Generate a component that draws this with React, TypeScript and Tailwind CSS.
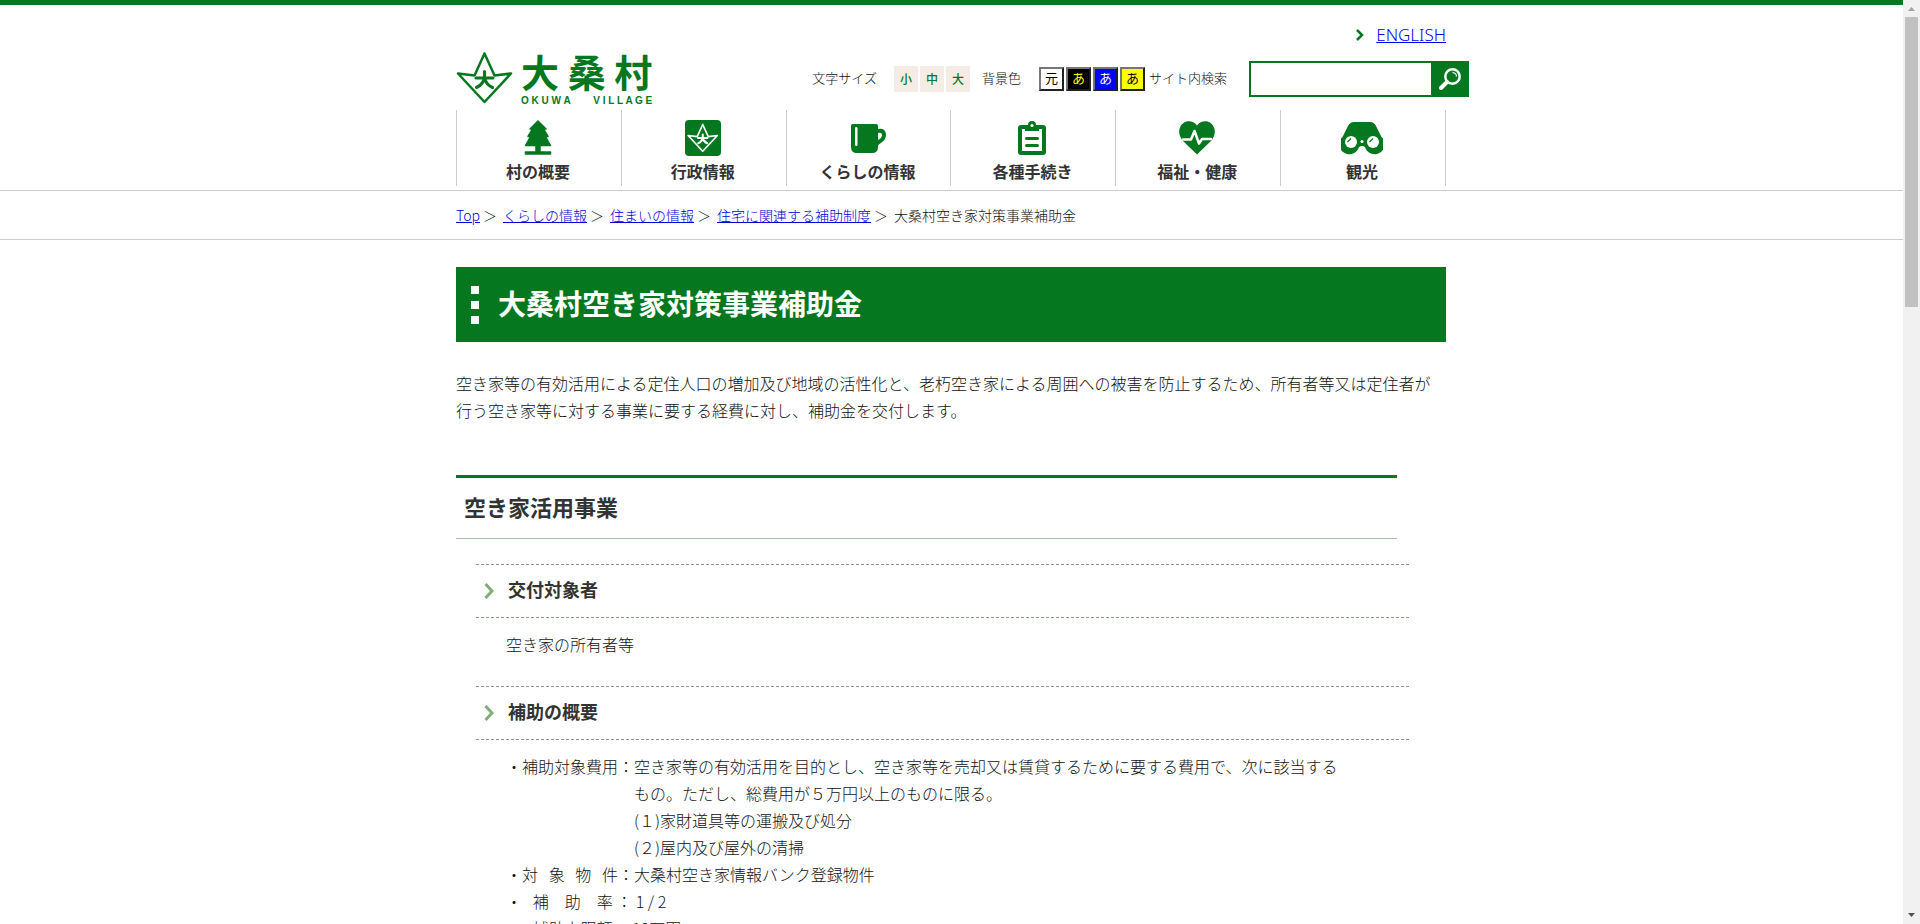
import type { ReactNode } from "react"

const GREEN = "#05771f"

function VillageMark({ className, weight }: { className: string; weight: number }) {
  return (
    <svg viewBox="0 0 58 54" fill="none" stroke="currentColor" className={className} aria-hidden="true">
      <path d="M28.500 2.500 18.500 24.500 2 22.500 28.500 51 55 22.500 38.500 24.500Z" strokeWidth={weight} strokeLinejoin="round" />
      <path
        d="M20 27H37M28.500 20.500V26Q27.500 33.500 20.500 36.500M28.500 27Q30 33.500 36.500 36.500"
        strokeWidth={weight * 1.25}
        strokeLinecap="round"
      />
    </svg>
  )
}

function TreeIcon() {
  return (
    <svg viewBox="0 0 36 36" fill={GREEN} stroke={GREEN} strokeLinejoin="round" className="h-9 w-9">
      <path d="M18 1 26 9H23.500L28 16.500H25.500L30.500 25.500H20V32H30.500V34H5.500V32H16V25.500H5.500L10.500 16.500H8L12.500 9H10Z" strokeWidth="1.500" />
    </svg>
  )
}

function MarkIcon() {
  return (
    <span className="flex h-9 w-9 items-center justify-center rounded bg-[#05771f] text-white">
      <VillageMark className="h-[30px] w-8" weight={3} />
    </span>
  )
}

function CupIcon() {
  return (
    <svg viewBox="0 0 36 36" fill={GREEN} className="h-9 w-9">
      <path d="M2.500 4H26Q28 4 28 6V9Q35.500 7.500 36 14.500C36 21 31 22 28 25.500V27Q28 33 22 33H7Q1 33 1 27V6Q1 4 2.500 4Z" />
      <path d="M28 13Q32 12 32 15T28 20Z" fill="white" />
      <rect x="5" y="7" width="2.500" height="19" rx="1.200" fill="white" />
    </svg>
  )
}

function ClipboardIcon() {
  return (
    <svg viewBox="0 0 36 36" fill="none" stroke={GREEN} className="h-9 w-9">
      <rect x="6" y="7" width="24" height="26" rx="1" strokeWidth="4" />
      <path d="M11 5H14A4 4 0 0 1 22 5H25V11H11Z" fill={GREEN} stroke="none" />
      <circle cx="18" cy="5.500" r="1.500" fill="white" stroke="none" />
      <path d="M12.500 18.500H23.500M12.500 25.500H23.500" strokeWidth="3" strokeLinecap="round" />
    </svg>
  )
}

function HeartIcon() {
  return (
    <svg viewBox="0 0 36 36" fill={GREEN} className="h-9 w-9">
      <path d="M18 34.500 4 21Q-1 15 .5 9C3 0 13-1 18 5.500 23-1 33 0 35.500 9Q37 15 32 21Z" />
      <path d="M4 19.500H12L15.500 11 20 23.500 23 19H32" fill="none" stroke="white" strokeWidth="2.500" strokeLinejoin="round" strokeLinecap="round" />
    </svg>
  )
}

function BinocularsIcon() {
  return (
    <svg viewBox="0 0 42 36" fill={GREEN} className="h-9 w-[42px]">
      <path d="M13 2H29Q33 2 35 6L40.500 17A10 10 0 1 1 24 27Q21 25 18 27A10 10 0 1 1 1.500 17L7 6Q9 2 13 2Z" />
      <circle cx="10" cy="22" r="6" fill="white" />
      <circle cx="32" cy="22" r="6" fill="white" />
      <circle cx="21" cy="21.500" r="1.500" fill="white" />
      <path d="M6.500 22 10 18.500M28.500 22 32 18.500" fill="none" stroke={GREEN} strokeWidth="1.200" />
    </svg>
  )
}

const navItems: { label: string; icon: ReactNode }[] = [
  { label: "村の概要", icon: <TreeIcon /> },
  { label: "行政情報", icon: <MarkIcon /> },
  { label: "くらしの情報", icon: <CupIcon /> },
  { label: "各種手続き", icon: <ClipboardIcon /> },
  { label: "福祉・健康", icon: <HeartIcon /> },
  { label: "観光", icon: <BinocularsIcon /> },
]

const crumbs = ["Top", "くらしの情報", "住まいの情報", "住宅に関連する補助制度"]

const colorButtons = [
  { label: "元", style: "bg-white text-black" },
  { label: "あ", style: "bg-black text-[#ffff00]" },
  { label: "あ", style: "bg-[#0000ff] text-white" },
  { label: "あ", style: "bg-[#ffff00] text-black" },
]

function SubHeading({ children }: { children: ReactNode }) {
  return (
    <h3 className="ml-5 flex h-[54px] w-[933px] items-center gap-[14px] border-y border-dashed border-[#7f9f7f] pl-2 text-lg font-bold text-[#333]">
      <svg viewBox="0 0 10 16" className="h-4 w-[10px]" fill="none" stroke="#82ad76" strokeWidth="3">
        <path d="M1.500 1 8 8 1.500 15" />
      </svg>
      <span className="pb-1">{children}</span>
    </h3>
  )
}

function Header() {
  return (
    <header className="border-b border-[#ccc] border-t-[5px] border-t-[#05771f]">
      <div className="mx-auto w-[991px] pr-px">
        <div className="flex h-[105px] justify-between">
          <a href="#" className="flex items-start gap-[7px] pt-[46px] text-[#05771f]">
            <VillageMark className="h-[54px] w-[58px]" weight={2.5} />
            <span className="flex flex-col">
              <span className="text-[38px] leading-10 font-bold">大 桑 村</span>
              <span className="flex justify-between pt-1 font-['Liberation_Sans'] text-[10px] leading-3 font-bold">
                <span>O K U W A</span>
                <span>V I L L A G E</span>
              </span>
            </span>
          </a>
          <div className="-mr-[23px] flex flex-col">
            <div className="flex h-[56px] items-center justify-end gap-3 pt-1 pr-[23px]">
              <svg viewBox="0 0 8 12" className="h-3 w-2" fill="none" stroke={GREEN} strokeWidth="2.500">
                <path d="M1 1 6 6 1 11" />
              </svg>
              <a href="#" className="font-['Noto_Sans'] text-[17px] font-light text-[#0000ee] underline">
                ENGLISH
              </a>
            </div>
            <div className="flex h-9 items-center text-[13px] font-light text-[#111]">
              <span className="mr-[17px] pb-[2px]">文字サイズ</span>
              <div className="flex gap-[2px]">
                {["小", "中", "大"].map((size) => (
                  <button key={size} type="button" className="h-[26px] w-6 bg-[#f5ece6] text-xs font-medium text-[#05771f]">
                    {size}
                  </button>
                ))}
              </div>
              <span className="mr-[18px] ml-3 pb-[2px]">背景色</span>
              <div className="flex gap-[2px]">
                {colorButtons.map((b, i) => (
                  <button
                    key={i}
                    type="button"
                    className={`flex h-6 w-[25px] items-center justify-center border-2 border-t-[#767676] border-r-[#212121] border-b-[#212121] border-l-[#767676] pb-[2px] text-[13px] font-normal ${b.style}`}
                  >
                    {b.label}
                  </button>
                ))}
              </div>
              <label htmlFor="site-search" className="mr-[22px] ml-1 pb-[2px]">
                サイト内検索
              </label>
              <input id="site-search" type="text" className="h-9 w-[182px] border-2 border-r-0 border-[#05771f] px-2" />
              <button type="submit" aria-label="検索" className="flex h-9 w-[38px] items-center justify-center bg-[#05771f]">
                <svg viewBox="0 0 24 24" className="h-6 w-6" fill="none" stroke="white">
                  <circle cx="14.500" cy="9.500" r="7.200" strokeWidth="2.500" />
                  <path d="M9 15 3 21" strokeWidth="4" strokeLinecap="round" />
                  <path d="M14.500 5.500Q18.500 6 18.500 9.500" strokeWidth="1.200" />
                </svg>
              </button>
            </div>
          </div>
        </div>
        <nav className="mb-1 grid h-[76px] grid-cols-6 border-r border-[#ccc]">
          {navItems.map((item) => (
            <a
              key={item.label}
              href="#"
              className="flex flex-col items-center border-l border-[#ccc] pt-[10px] pr-[2px] text-base leading-[30px] font-bold text-[#333]"
            >
              {item.icon}
              {item.label}
            </a>
          ))}
        </nav>
      </div>
    </header>
  )
}

function Breadcrumbs() {
  return (
    <div className="border-b border-[#ccc]">
      <div className="mx-auto flex h-12 w-[991px] items-center pr-px text-sm font-light text-[#111]">
        {crumbs.map((c) => (
          <span key={c} className="flex">
            <a href="#" className="text-[#0000dd] underline">
              {c}
            </a>
            <span className="mr-[6px] ml-[3px]">＞</span>
          </span>
        ))}
        <span>大桑村空き家対策事業補助金</span>
      </div>
    </div>
  )
}

function Article() {
  return (
    <main className="mx-auto w-[991px] pt-[27px] pr-px text-base leading-[27px] font-light text-[#111]">
      <h1 className="flex h-[75px] items-center gap-[19px] bg-[#05771f] pl-[15px] text-[28px] font-bold text-white">
        <span className="flex flex-col gap-[7px]">
          <i className="h-2 w-2 bg-white" />
          <i className="h-2 w-2 bg-white" />
          <i className="h-2 w-2 bg-white" />
        </span>
        <span className="pb-[2px]">大桑村空き家対策事業補助金</span>
      </h1>
      <p className="mt-7">
        空き家等の有効活用による定住人口の増加及び地域の活性化と、老朽空き家による周囲への被害を防止するため、所有者等又は定住者が行う空き家等に対する事業に要する経費に対し、補助金を交付します。
      </p>
      <h2 className="mt-[51px] mb-[25px] flex h-16 w-[941px] items-center border-t-[3px] border-b border-t-[#05771f] border-b-[#a3c3ae] pb-1 pl-2 text-[22px] font-bold text-[#333]">
        空き家活用事業
      </h2>
      <SubHeading>交付対象者</SubHeading>
      <p className="mt-[13px] mb-7 pl-[50px]">空き家の所有者等</p>
      <SubHeading>補助の概要</SubHeading>
      <div className="mt-[13px] pl-[50px] whitespace-pre">
        <div className="flex">
          <p>・補助対象費用：</p>
          <div>
            <p>空き家等の有効活用を目的とし、空き家等を売却又は賃貸するために要する費用で、次に該当する</p>
            <p>もの。ただし、総費用が５万円以上のものに限る。</p>
            <p>(１)家財道具等の運搬及び処分</p>
            <p>(２)屋内及び屋外の清掃</p>
          </div>
        </div>
        <p>・対{"   "}象{"   "}物{"   "}件：大桑村空き家情報バンク登録物件</p>
        <p>・{"   "}補　助　率 ： 1 / 2</p>
        <p>・{"   "}補助上限額 ：10万円</p>
      </div>
    </main>
  )
}

function ScrollBar() {
  return (
    <div className="flex w-[17px] shrink-0 flex-col items-center bg-[#f1f1f1]" aria-hidden="true">
      <svg viewBox="0 0 17 17" className="h-[17px] w-[17px]" fill="#a3a3a3">
        <path d="M5 11 8.500 7 12 11Z" />
      </svg>
      <div className="h-[290px] w-[13px] bg-[#c1c1c1]" />
      <svg viewBox="0 0 17 17" className="mt-auto h-[17px] w-[17px]" fill="#505050">
        <path d="M5 6 8.500 10 12 6Z" />
      </svg>
    </div>
  )
}

export default function App() {
  return (
    <div lang="ja" className="flex h-screen bg-white font-['Noto_Sans_CJK_JP',sans-serif] text-[#333]">
      <div className="min-w-0 flex-1 overflow-hidden">
        <Header />
        <Breadcrumbs />
        <Article />
      </div>
      <ScrollBar />
    </div>
  )
}
